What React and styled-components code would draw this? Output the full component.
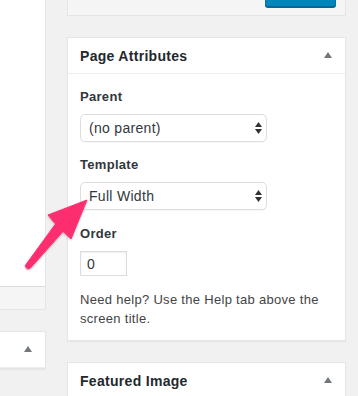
import React from "react";
import styled, { createGlobalStyle } from "styled-components";

const GlobalStyle = createGlobalStyle`
  html, body {
    margin: 0;
    padding: 0;
    background: #f1f1f1;
    font-family: "Liberation Sans", Arial, sans-serif;
    letter-spacing: 0.3px;
    overflow: hidden;
  }
`;

const Page = styled.div`
  position: relative;
  display: flex;
  gap: 21px;
  width: 358px;
  height: 396px;
  overflow: hidden;
`;

const LeftColumn = styled.div`
  width: 46px;
  flex-shrink: 0;
  display: flex;
  flex-direction: column;
  gap: 21px;
`;

const RightColumn = styled.div`
  width: 279px;
  flex-shrink: 0;
  display: flex;
  flex-direction: column;
  gap: 21px;
`;

const EditorBox = styled.div`
  background: #fff;
  border-right: 1px solid #e5e5e5;
  border-bottom: 1px solid #e5e5e5;
  display: flex;
  flex-direction: column;
`;

const EditorBody = styled.div`
  height: 286px;
`;

const EditorFooter = styled.div`
  height: 22px;
  background: #f5f5f5;
  border-top: 1px solid #ddd;
`;

const PublishBox = styled.div`
  box-sizing: border-box;
  height: 16px;
  background: #f5f5f5;
  border: 1px solid #e5e5e5;
  border-top: none;
  display: flex;
  justify-content: flex-end;
  align-items: flex-end;
  padding: 0 9px 8px 0;
`;

const PublishButton = styled.div`
  box-sizing: border-box;
  width: 71px;
  height: 7px;
  background: #0085ba;
  border: 1px solid #0073aa;
  border-top: none;
  border-bottom-color: #006799;
  border-radius: 0 0 3px 3px;
  box-shadow: 0 1px 0 #006799;
`;

const Postbox = styled.div`
  background: #fff;
  border: 1px solid #e5e5e5;
  border-left: ${(p) => (p.$cutLeft ? "none" : "1px solid #e5e5e5")};
  box-shadow: 0 1px 1px rgba(0, 0, 0, 0.04);
`;

const PostboxHeader = styled.div`
  box-sizing: border-box;
  height: 36px;
  display: flex;
  align-items: center;
  justify-content: space-between;
  padding: 0 13px 0 12px;
  border-bottom: 1px solid #eee;
`;

const PostboxTitle = styled.h2`
  margin: 0;
  font-size: 14px;
  font-weight: 700;
  line-height: 36px;
  color: #23282d;
`;

const Toggle = styled.span`
  width: 0;
  height: 0;
  border-left: 4px solid transparent;
  border-right: 4px solid transparent;
  border-bottom: 6px solid #72777c;
  margin-top: -1px;
`;

const Inside = styled.div`
  padding: 0 12px 12px;
`;

const FieldLabel = styled.p`
  margin: ${(p) => p.$top}px 0 7px;
  font-size: 13px;
  font-weight: 700;
  line-height: 20px;
  color: #32373c;
`;

const SelectBox = styled.div`
  box-sizing: border-box;
  width: 187px;
  height: 28px;
  border: 1px solid #ddd;
  border-radius: 5px;
  background: #fff;
  display: flex;
  align-items: center;
  justify-content: space-between;
  padding: 0 4px 0 8px;
  font-size: 14px;
  color: #32373c;
  box-shadow: 0 1px 1px rgba(0, 0, 0, 0.03);
`;

const NumberInput = styled.div`
  box-sizing: border-box;
  width: 47px;
  height: 25px;
  border: 1px solid #ddd;
  box-shadow: inset 0 1px 2px rgba(0, 0, 0, 0.07);
  display: flex;
  align-items: center;
  padding-left: 6px;
  font-size: 14px;
  color: #32373c;
`;

const HelpText = styled.p`
  margin: 14px 0 0;
  font-size: 13px;
  line-height: 19px;
  color: #444;
`;

const ArrowLayer = styled.svg`
  position: absolute;
  left: 0;
  top: 0;
  pointer-events: none;
`;

function SelectArrows() {
  return (
    <svg width="7" height="12" viewBox="0 0 7 12">
      <polygon points="0,5 3.5,0 7,5" fill="#333" />
      <polygon points="0,7 3.5,12 7,7" fill="#333" />
    </svg>
  );
}

function Select({ value }) {
  return (
    <SelectBox>
      <span>{value}</span>
      <SelectArrows />
    </SelectBox>
  );
}

export default function App() {
  return (
    <>
      <GlobalStyle />
      <Page>
        <LeftColumn>
          <EditorBox>
            <EditorBody />
            <EditorFooter />
          </EditorBox>
          <Postbox $cutLeft>
            <PostboxHeader>
              <span />
              <Toggle />
            </PostboxHeader>
          </Postbox>
        </LeftColumn>

        <RightColumn>
          <PublishBox>
            <PublishButton />
          </PublishBox>

          <Postbox>
            <PostboxHeader>
              <PostboxTitle>Page Attributes</PostboxTitle>
              <Toggle />
            </PostboxHeader>
            <Inside>
              <FieldLabel $top={13}>Parent</FieldLabel>
              <Select value="(no parent)" />
              <FieldLabel $top={13}>Template</FieldLabel>
              <Select value="Full Width" />
              <FieldLabel $top={14}>Order</FieldLabel>
              <NumberInput>0</NumberInput>
              <HelpText>Need help? Use the Help tab above the screen title.</HelpText>
            </Inside>
          </Postbox>

          <Postbox>
            <PostboxHeader>
              <PostboxTitle>Featured Image</PostboxTitle>
              <Toggle />
            </PostboxHeader>
          </Postbox>
        </RightColumn>

        <ArrowLayer width="358" height="396" viewBox="0 0 358 396">
          <defs>
            <filter id="arrowShadow" x="-20%" y="-20%" width="140%" height="140%">
              <feDropShadow dx="0" dy="1" stdDeviation="1.2" floodColor="#000" floodOpacity="0.25" />
            </filter>
          </defs>
          <path
            d="M87,200 L71,239 L63,231.5 L30.5,268 Q27.5,270.5 25.5,267 Q25,265.5 26,264.5 L55.5,224 L48,215 Z"
            fill="#fd2f70"
            stroke="#fd2f70"
            strokeWidth="1"
            strokeLinejoin="round"
            filter="url(#arrowShadow)"
          />
        </ArrowLayer>
      </Page>
    </>
  );
}
